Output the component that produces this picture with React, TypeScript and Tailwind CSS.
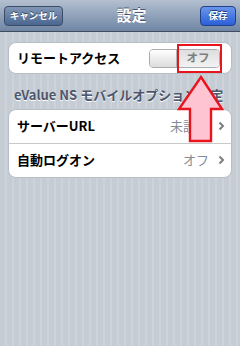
import React from "react";

const jp = { fontFamily: '"Noto Sans CJK JP", "Noto Sans", sans-serif' };

const Chevron = () => (
  <svg width="7" height="10" viewBox="0 0 7 10" className="shrink-0">
    <path d="M1.5 1.5 L5 5 L1.5 8.5" fill="none" stroke="#7a7f87" strokeWidth="2" />
  </svg>
);

const Row = ({ label, value }: { label: string; value: string }) => (
  <div className="flex items-center justify-between h-[33px] pl-2 pr-[6px]">
    <span className="text-[13px] font-bold text-black">{label}</span>
    <div className="flex items-center gap-[9px]">
      <span className="text-[13px] text-[#838b96]">{value}</span>
      <Chevron />
    </div>
  </div>
);

export default function App() {
  return (
    <div
      style={jp}
      className="relative w-[240px] h-[346px] overflow-hidden bg-[repeating-linear-gradient(90deg,#c5ccd4_0px,#c5ccd4_5px,#cdd3da_5px,#cdd3da_7px)]"
    >
      {/* nav bar */}
      <div className="flex items-center justify-between h-[32px] px-[4px] bg-gradient-to-b from-[#b4c0d0] to-[#6f86a4] border-b border-[#3f4c5e]">
        <button className="h-[20px] w-[59px] rounded-[4px] border border-[#3c4c66] bg-gradient-to-b from-[#8297b6] to-[#4a6690] text-[9.5px] font-bold text-white [text-shadow:0_-1px_0_#33425a]">
          キャンセル
        </button>
        <span className="text-[15px] font-bold text-white [text-shadow:0_-1px_0_#4a5a72]">設定</span>
        <button className="h-[20px] w-[36px] rounded-[4px] border border-[#23408a] bg-gradient-to-b from-[#6b95ea] to-[#2a5fd6] text-[9.5px] font-bold text-white [text-shadow:0_-1px_0_#1c3880]">
          保存
        </button>
      </div>

      <div className="px-[8px] pt-[10px]">
        {/* remote access */}
        <div className="flex items-center justify-between h-[32px] rounded-[8px] bg-white border border-[#b8bec6] pl-2 pr-[11px]">
          <span className="text-[13px] font-bold text-black">リモートアクセス</span>
          <div className="flex h-[19px] w-[71px] rounded-[4px] border border-[#a9acb0] overflow-hidden">
            <div className="w-[27px] bg-gradient-to-b from-[#ffffff] to-[#dcdcdc] border-r border-[#b3b3b3]" />
            <div className="flex-1 flex items-center justify-center bg-gradient-to-b from-[#dedede] to-[#f2f2f2] text-[11.5px] font-bold text-[#7d7d7d]">
              オフ
            </div>
          </div>
        </div>

        <div className="pl-[6px] pt-[11px] pb-[4px] text-[13px] font-bold text-[#4c566c] whitespace-nowrap [text-shadow:0_1px_0_#ffffff]">
          eValue NS モバイルオプション設定
        </div>

        <div className="rounded-[8px] bg-white border border-[#b8bec6]">
          <Row label="サーバーURL" value="未設定" />
          <div className="h-px bg-[#c8c8c8]" />
          <Row label="自動ログオン" value="オフ" />
        </div>
      </div>

      {/* annotation: red box + arrow */}
      <div className="absolute left-[177px] top-[44px] w-[45px] h-[29px] border-2 border-[#e8141e]" />
      <svg className="absolute left-[176px] top-[75px]" width="50" height="70" viewBox="0 0 50 70">
        <path
          d="M25 2 L46 34 L35 34 L35 66 L14 66 L14 34 L3 34 Z"
          fill="#ffc4d2"
          stroke="#e8141e"
          strokeWidth="2.4"
          strokeLinejoin="miter"
        />
      </svg>
    </div>
  );
}
